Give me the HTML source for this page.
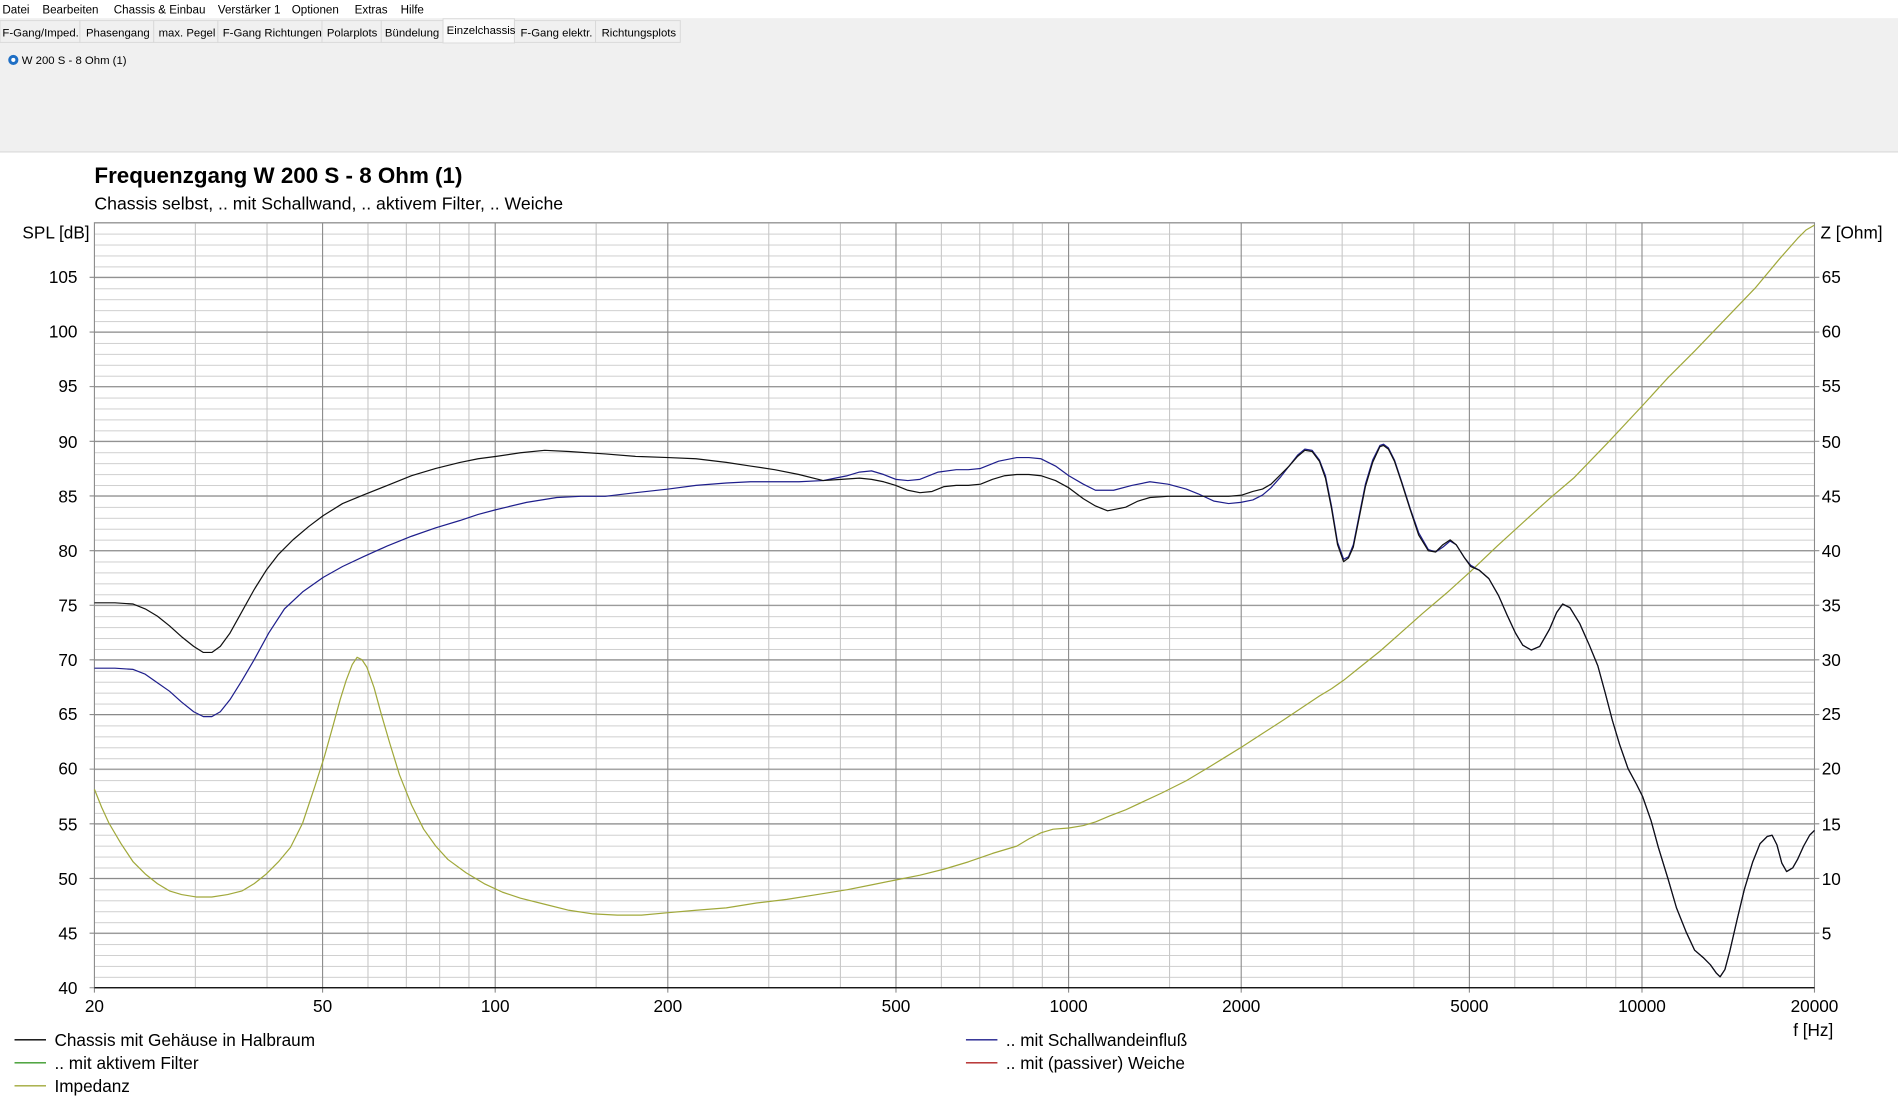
<!DOCTYPE html>
<html><head><meta charset="utf-8"><style>
html,body{margin:0;padding:0;background:#fff;overflow:hidden}
svg{display:block}
text{font-family:"Liberation Sans",sans-serif}
</style></head><body>
<svg width="1898" height="1103" viewBox="0 0 1568 911.2" xmlns="http://www.w3.org/2000/svg">
<defs>
<pattern id="hm" patternUnits="userSpaceOnUse" x="0" y="184" width="20" height="9.029">
<line x1="0" y1="0.3" x2="20" y2="0.3" stroke="#c8c8c8" stroke-width="0.8"/>
</pattern>
</defs>
<!-- header -->
<rect x="0" y="0" width="1568" height="15" fill="#fff"/>
<rect x="0" y="15" width="1568" height="110" fill="#f0f0f0"/>
<line x1="0" y1="125.5" x2="1568" y2="125.5" stroke="#d8d8d8"/>
<g font-size="9.6" fill="#000">
<text x="2" y="11">Datei</text><text x="35" y="11">Bearbeiten</text><text x="94" y="11">Chassis &amp; Einbau</text>
<text x="180" y="11">Verstärker 1</text><text x="241" y="11">Optionen</text><text x="293" y="11">Extras</text><text x="331" y="11">Hilfe</text>
</g>
<g fill="#f0f0f0" stroke="#d9d9d9" stroke-width="0.8">
<rect x="0" y="17" width="66" height="18"/><rect x="66" y="17" width="61" height="18"/><rect x="127" y="17" width="53" height="18"/>
<rect x="180" y="17" width="86" height="18"/><rect x="266" y="17" width="49" height="18"/><rect x="315" y="17" width="51" height="18"/>
<rect x="366" y="15.5" width="59" height="20" fill="#fafafa"/><rect x="425" y="17" width="67" height="18"/><rect x="492" y="17" width="70" height="18"/>
</g>
<g font-size="9.4" fill="#000">
<text x="2" y="30">F-Gang/Imped.</text><text x="71" y="30">Phasengang</text><text x="131" y="30">max. Pegel</text>
<text x="184" y="30">F-Gang Richtungen</text><text x="270" y="30">Polarplots</text><text x="318" y="30">Bündelung</text>
<text x="369" y="28">Einzelchassis</text><text x="430" y="30">F-Gang elektr.</text><text x="497" y="30">Richtungsplots</text>
</g>
<circle cx="11" cy="49.5" r="4.2" fill="#1f6fc5"/><circle cx="11" cy="49.5" r="1.7" fill="#fff"/>
<text x="18" y="53" font-size="9.4">W 200 S - 8 Ohm (1)</text>
<!-- titles -->
<text x="78" y="151" font-size="18.5" font-weight="bold">Frequenzgang W 200 S - 8 Ohm (1)</text>
<text x="78" y="173" font-size="14.6">Chassis selbst, .. mit Schallwand, .. aktivem Filter, .. Weiche</text>
<!-- grid -->
<rect x="78" y="184" width="1421" height="632" fill="url(#hm)"/>
<path stroke="#c8c8c8" stroke-width="0.9" fill="none" d="M161.4 184V816M220.6 184V816M304 184V816M335.7 184V816M363.2 184V816M387.4 184V816
M492.5 184V816M635.1 184V816M694.3 184V816M777.7 184V816M809.4 184V816M836.9 184V816M861.1 184V816
M966.2 184V816M1108.8 184V816M1168 184V816M1251.4 184V816M1283.1 184V816M1310.6 184V816M1334.8 184V816
M1439.9 184V816"/>
<path stroke="#8a8a8a" stroke-width="0.9" fill="none" d="M266.5 184V816M409.1 184V816M551.7 184V816M740.2 184V816M882.8 184V816M1025.4 184V816M1213.9 184V816M1356.5 184V816
M78 229.1H1499M78 274.3H1499M78 319.4H1499M78 364.6H1499M78 409.7H1499M78 454.9H1499M78 500H1499M78 545.1H1499M78 590.3H1499M78 635.4H1499M78 680.6H1499M78 725.7H1499M78 770.9H1499
M74 229.1H78M74 274.3H78M74 319.4H78M74 364.6H78M74 409.7H78M74 454.9H78M74 500H78M74 545.1H78M74 590.3H78M74 635.4H78M74 680.6H78M74 725.7H78M74 770.9H78M74 816H78
M1499 229.1H1503M1499 274.3H1503M1499 319.4H1503M1499 364.6H1503M1499 409.7H1503M1499 454.9H1503M1499 500H1503M1499 545.1H1503M1499 590.3H1503M1499 635.4H1503M1499 680.6H1503M1499 725.7H1503M1499 770.9H1503
M78 816V820M266.5 816V820M409.1 816V820M551.7 816V820M740.2 816V820M882.8 816V820M1025.4 816V820M1213.9 816V820M1356.5 816V820M1499 816V820"/>
<rect x="78" y="184" width="1421" height="632" fill="none" stroke="#8a8a8a" stroke-width="0.9"/>
<line x1="78" y1="816" x2="1499" y2="816" stroke="#000" stroke-width="1"/>
<!-- axis labels -->
<g font-size="14.2" text-anchor="end">
<text x="74" y="197">SPL [dB]</text>
<text x="64" y="234">105</text><text x="64" y="279">100</text><text x="64" y="324">95</text><text x="64" y="370">90</text>
<text x="64" y="415">85</text><text x="64" y="460">80</text><text x="64" y="505">75</text><text x="64" y="550">70</text>
<text x="64" y="595">65</text><text x="64" y="640">60</text><text x="64" y="686">55</text><text x="64" y="731">50</text>
<text x="64" y="776">45</text><text x="64" y="821">40</text>
</g>
<g font-size="14.2">
<text x="1504" y="197">Z [Ohm]</text>
<text x="1505" y="234">65</text><text x="1505" y="279">60</text><text x="1505" y="324">55</text><text x="1505" y="370">50</text>
<text x="1505" y="415">45</text><text x="1505" y="460">40</text><text x="1505" y="505">35</text><text x="1505" y="550">30</text>
<text x="1505" y="595">25</text><text x="1505" y="640">20</text><text x="1505" y="686">15</text><text x="1505" y="731">10</text>
<text x="1505" y="776">5</text>
</g>
<g font-size="14.2" text-anchor="middle">
<text x="78" y="836">20</text><text x="266.5" y="836">50</text><text x="409.1" y="836">100</text><text x="551.7" y="836">200</text>
<text x="740.2" y="836">500</text><text x="882.8" y="836">1000</text><text x="1025.4" y="836">2000</text><text x="1213.9" y="836">5000</text>
<text x="1356.5" y="836">10000</text><text x="1499" y="836">20000</text><text x="1498" y="856">f [Hz]</text>
</g>
<!-- curves -->
<polyline fill="none" stroke="#a0a83a" stroke-width="1" stroke-linejoin="round" points="78,652 84,667 90,680 100,697 110,712 120,722 130,730 140,736 150,739 162,741 175,741 188,739 200,736 210,730 220,722 230,712 240,700 250,680 260,650 268,625 275,600 281,578 286,562 291,549 295,543 299,545 303,551 309,568 315,590 322,614 330,640 340,665 350,685 360,699 370,710 385,721 400,730 415,737 430,742 450,747 470,752 490,755 510,756 530,756 552,754 575,752 600,750 625,746 650,743 675,739 700,735 720,731 740,727 760,723 780,718 800,712 820,705 840,699 850,693 860,688 870,685 883,684 895,682 905,679 917,674 930,669 945,662 960,655 980,645 1000,633 1013,625 1026,617 1043,606 1060,595 1075,585 1090,575 1100,569 1110,562 1125,550 1140,538 1157,523 1175,507 1195,490 1215,472 1237,451 1260,430 1280,412 1300,395 1328,366 1357,335 1378,312 1400,290 1425,264 1450,238 1470,214 1485,197 1492,190 1499,186"/>
<polyline fill="none" stroke="#1e1e8c" stroke-width="1" stroke-linejoin="round" points="78,552 95,552 110,553 120,557 130,564 140,571 150,580 160,588 168,592 175,592 182,588 190,578 200,562 210,545 222,523 235,503 250,489 267,477 283,468 300,460 320,451 340,443 360,436 380,430 395,425 410,421 435,415 460,411 480,410 500,410 525,407 552,404 575,401 600,399 620,398 640,398 660,398 680,397 690,395 700,393 710,390 720,389 730,392 740,396 750,397 760,396 775,390 790,388 800,388 810,387 825,381 840,378 850,378 860,379 872,385 883,393 895,400 905,405 920,405 935,401 950,398 965,400 980,404 990,408 1003,414 1015,416 1025,415 1035,413 1043,409 1050,403 1058,394 1065,385 1072,376 1078,371 1084,372 1090,380 1095,393 1100,418 1105,448 1110,462 1114,460 1118,450 1123,425 1128,400 1134,380 1140,368 1143,367 1147,370 1152,380 1158,398 1165,420 1172,440 1180,454 1186,456 1192,452 1198,447 1203,450 1210,461 1215,467 1222,471 1230,478 1238,492 1245,508 1252,523 1258,533 1265,537 1272,534 1280,520 1286,506 1291,499 1297,502 1305,515 1313,533 1320,550 1326,572 1332,595 1338,615 1345,635 1352,648 1357,658 1364,678 1370,700 1378,726 1385,750 1393,770 1400,785 1407,791 1413,797 1418,804 1421,807 1425,801 1429,786 1435,760 1441,735 1448,712 1454,697 1460,691 1464,690 1468,698 1472,713 1476,720 1481,717 1485,710 1490,699 1495,690 1499,686"/>
<polyline fill="none" stroke="#111" stroke-width="1" stroke-linejoin="round" points="78,498 95,498 110,499 120,503 130,509 140,517 150,526 160,534 168,539 175,539 182,534 190,523 200,505 210,487 220,471 230,458 242,446 255,435 267,426 283,416 300,409 320,401 340,393 360,387 380,382 395,379 410,377 430,374 450,372 470,373 500,375 525,377 552,378 575,379 600,382 620,385 640,388 660,392 680,397 695,396 710,395 720,396 730,398 740,401 750,405 760,407 770,406 780,402 790,401 800,401 810,400 820,396 830,393 840,392 850,392 860,393 872,397 883,403 895,412 905,418 915,422 930,419 940,414 950,411 965,410 980,410 990,410 1003,410 1015,410 1026,409 1035,406 1043,404 1050,400 1058,392 1065,385 1072,377 1078,372 1084,373 1090,381 1095,395 1100,420 1105,450 1110,464 1114,461 1118,452 1123,427 1128,402 1134,382 1140,369 1143,368 1147,371 1152,381 1158,399 1165,421 1172,442 1180,455 1186,456 1192,450 1198,446 1203,450 1210,461 1215,468 1222,471 1230,478 1238,492 1245,508 1252,523 1258,533 1265,537 1272,534 1280,520 1286,506 1291,499 1297,502 1305,515 1313,533 1320,550 1326,572 1332,595 1338,615 1345,635 1352,648 1357,658 1364,678 1370,700 1378,726 1385,750 1393,770 1400,785 1407,791 1413,797 1418,804 1421,807 1425,801 1429,786 1435,760 1441,735 1448,712 1454,697 1460,691 1464,690 1468,698 1472,713 1476,720 1481,717 1485,710 1490,699 1495,690 1499,686"/>
<!-- legend -->
<g stroke-width="1.2">
<line x1="12" y1="859" x2="38" y2="859" stroke="#000"/>
<line x1="12" y1="878" x2="38" y2="878" stroke="#3a9a2a"/>
<line x1="12" y1="897" x2="38" y2="897" stroke="#a0a83a"/>
<line x1="798" y1="859" x2="824" y2="859" stroke="#1e1e8c"/>
<line x1="798" y1="878" x2="824" y2="878" stroke="#b02020"/>
</g>
<g font-size="14.2">
<text x="45" y="864">Chassis mit Gehäuse in Halbraum</text>
<text x="45" y="883">.. mit aktivem Filter</text>
<text x="45" y="902">Impedanz</text>
<text x="831" y="864">.. mit Schallwandeinfluß</text>
<text x="831" y="883">.. mit (passiver) Weiche</text>
</g>
</svg>
</body></html>
